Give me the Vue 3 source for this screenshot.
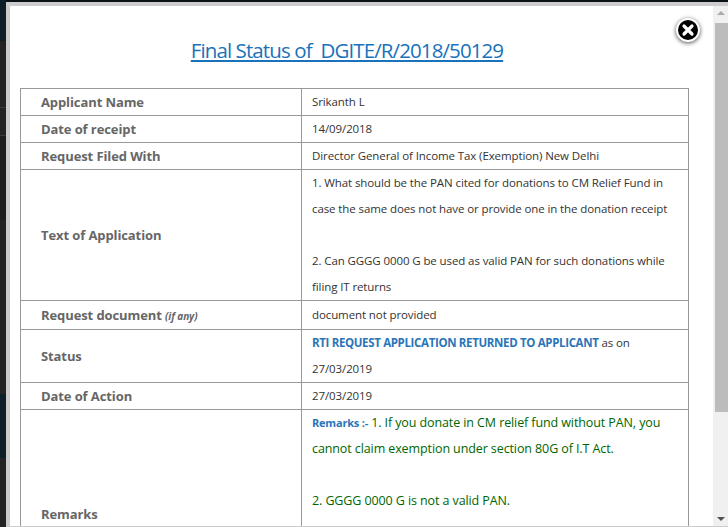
<script setup>
const rows = [
  { label: 'Applicant Name', value: 'Srikanth L' },
  { label: 'Date of receipt', value: '14/09/2018' },
  { label: 'Request Filed With', value: 'Director General of Income Tax (Exemption) New Delhi' },
]
</script>

<template>
  <div class="page">
    <div class="backdrop">
      <div class="bd-head"></div>
      <div class="bd-mid"></div>
      <div class="bd-line"></div>
      <div class="bd-line second"></div>
      <div class="bd-dark"></div>
      <div class="bd-gap"></div>
      <div class="bd-teal"></div>
      <div class="bd-end"></div>
    </div>
    <div class="modal">
      <div class="content">
        <h2 class="title"><a href="#" @click.prevent>Final Status of &nbsp;DGITE/R/2018/50129</a></h2>
        <table class="details">
          <tbody>
            <tr v-for="row in rows" :key="row.label">
              <th>{{ row.label }}</th>
              <td>{{ row.value }}</td>
            </tr>
            <tr>
              <th>Text of Application</th>
              <td>
                1. What should be the PAN cited for donations to CM Relief Fund in case the same does not have or provide one in the donation receipt<br><br>
                2. Can GGGG 0000 G be used as valid PAN for such donations while filing IT returns
              </td>
            </tr>
            <tr class="doc">
              <th>Request document <small>(if any)</small></th>
              <td>document not provided</td>
            </tr>
            <tr>
              <th>Status</th>
              <td><b>RTI REQUEST APPLICATION RETURNED TO APPLICANT</b> as on 27/03/2019</td>
            </tr>
            <tr>
              <th>Date of Action</th>
              <td>27/03/2019</td>
            </tr>
            <tr>
              <th class="remarks-label">Remarks</th>
              <td class="remarks">
                <b>Remarks :-</b> 1. If you donate in CM relief fund without PAN, you cannot claim exemption under section 80G of I.T Act.<br><br>
                2. GGGG 0000 G is not a valid PAN.
              </td>
            </tr>
          </tbody>
        </table>
        <button class="close" aria-label="Close">
          <svg width="16" height="16" viewBox="0 0 16 16">
            <path d="M4 4 L12 12 M12 4 L4 12" stroke="#fff" stroke-width="3.2" stroke-linecap="round" />
          </svg>
        </button>
      </div>
      <div class="scrollbar">
        <div class="arrow up"></div>
        <div class="thumb"></div>
        <div class="arrow down"></div>
      </div>
    </div>
  </div>
</template>

<style scoped>
.page {
  display: flex;
  width: 728px;
  height: 527px;
  overflow: hidden;
  background: #0a1216;
  font-family: "Open Sans", "Liberation Sans", sans-serif;
}
.backdrop {
  width: 6px;
  flex: none;
  display: flex;
  flex-direction: column;
  background: #242424;
  overflow: hidden;
}
.bd-head { height: 41px; background: #0e1f28; flex: none; }
.bd-mid { height: 66px; flex: none; }
.bd-line { height: 1px; background: #3a3a3a; flex: none; margin-bottom: 27px; }
.bd-line.second { margin-bottom: 0; }
.bd-dark { height: 84px; background: #1c1e20; flex: none; }
.bd-gap { height: 174px; flex: none; }
.bd-teal { height: 64px; background: #0e1f28; flex: none; }
.bd-end { flex: 1; }

.modal {
  flex: 1;
  margin-top: 2px;
  display: flex;
  background: #fff;
  border-top: 4px solid #ccc;
  border-left: 4px solid #ccc;
  border-bottom: 1px solid #ccc;
  overflow: hidden;
}
.content {
  flex: 1;
  min-width: 0;
  position: relative;
  padding: 0 10px;
  overflow: hidden;
}
.title {
  margin: 31px 29px 0 0;
  height: 51px;
  text-align: center;
  font-size: 20.5px;
  font-weight: 400;
  line-height: 27px;
  letter-spacing: -0.9px;
}
.title a {
  color: #1a72bb;
  text-decoration: underline;
}
.details {
  width: 669px;
  border-collapse: collapse;
  table-layout: fixed;
}
.details th,
.details td {
  border: 1px solid #999;
  height: 26px;
  vertical-align: middle;
  text-align: left;
  line-height: 26px;
}
.details th {
  width: 260px;
  padding: 0 0 0 20px;
  font-size: 13px;
  font-weight: 700;
  color: #666;
  letter-spacing: -0.1px;
}
.details th small {
  font-size: 10px;
  font-style: italic;
}
.details td {
  padding: 0 10px;
  font-size: 11.5px;
  color: #333;
  letter-spacing: -0.1px;
}
.doc th,
.doc td { height: 28px; }
.details b {
  color: #2a75b8;
  font-weight: 700;
  letter-spacing: -0.35px;
}
.details .remarks {
  height: 208px;
  vertical-align: top;
  font-size: 12.5px;
  color: #060;
}
.details .remarks b {
  font-size: 11px;
  letter-spacing: -0.2px;
}
.close {
  position: absolute;
  left: 666px;
  top: 12px;
  width: 24px;
  height: 24px;
  padding: 0;
  display: flex;
  align-items: center;
  justify-content: center;
  background: #000;
  border: 2px solid #fff;
  border-radius: 50%;
  box-shadow: 0 1px 4px rgba(0, 0, 0, 0.7);
}
.scrollbar {
  width: 15px;
  flex: none;
  display: flex;
  flex-direction: column;
  align-items: stretch;
  background: #f0f0f0;
}
.thumb {
  height: 389px;
  margin-left: 2px;
  background: #bcbcbc;
}
.arrow {
  height: 17px;
  flex: none;
  position: relative;
}
.arrow::after {
  content: "";
  position: absolute;
  left: 4px;
  border-left: 4px solid transparent;
  border-right: 4px solid transparent;
}
.arrow.up::after { top: 5px; border-bottom: 4px solid #aaa; }
.arrow.down { margin-top: auto; }
.arrow.down::after { top: 8px; border-top: 4px solid #505050; }
</style>
